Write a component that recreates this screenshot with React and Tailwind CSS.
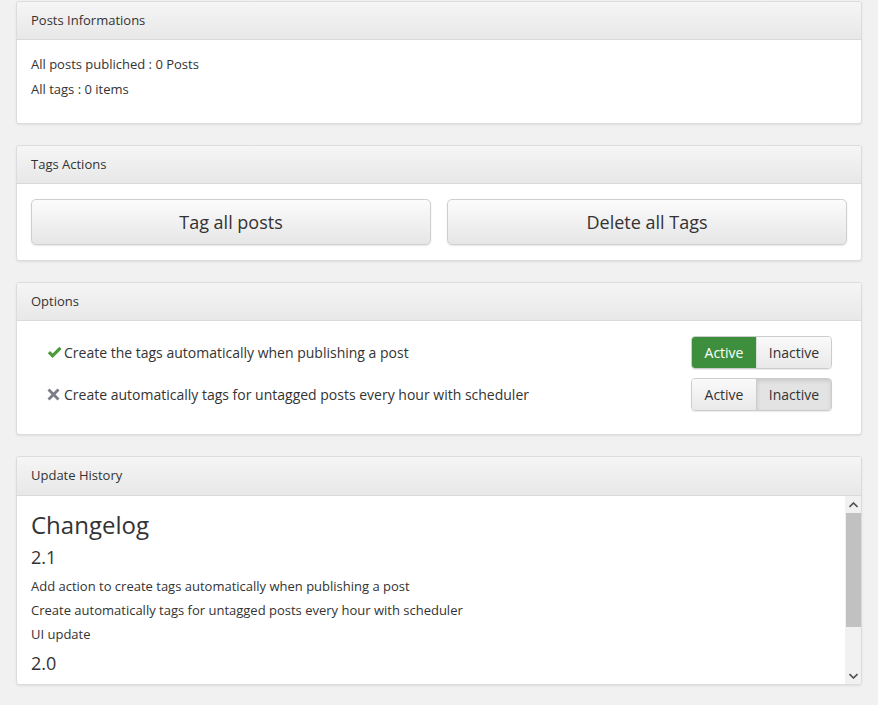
import { useState } from 'react'

const OPTIONS = [
  { key: 'publish', label: 'Create the tags automatically when publishing a post', active: true },
  { key: 'scheduler', label: 'Create automatically tags for untagged posts every hour with scheduler', active: false },
]

function Panel({ title, children, headClass = 'h-[38px]', bodyClass = '' }) {
  return (
    <div className="bg-white border border-[#dcdcdc] rounded-[3px] shadow-[0_1px_2px_rgba(0,0,0,0.08)]">
      <div className={`${headClass} flex items-center px-[14px] text-[13px] text-[#333] bg-gradient-to-b from-[#f5f5f5] to-[#e8e8e8] border-b border-[#dadada] rounded-t-[3px]`}>
        {title}
      </div>
      <div className={bodyClass}>{children}</div>
    </div>
  )
}

function Toggle({ active, onChange }) {
  return (
    <div className="flex rounded-[4px] border border-[#ccc] shadow-[0_1px_1px_rgba(0,0,0,0.08)] text-[14px] overflow-hidden">
      <button
        onClick={() => onChange(true)}
        className={active
          ? 'w-[64px] h-[31px] bg-[#3d8f3d] text-white'
          : 'w-[64px] h-[31px] bg-gradient-to-b from-[#fafafa] to-[#e9e9e9] text-[#333]'}
      >
        Active
      </button>
      <button
        onClick={() => onChange(false)}
        className={!active
          ? 'w-[75px] h-[31px] border-l border-[#ccc] bg-[#e3e3e3] text-[#333] shadow-[inset_0_2px_4px_rgba(0,0,0,0.12)]'
          : 'w-[75px] h-[31px] border-l border-[#ddd] bg-gradient-to-b from-[#fafafa] to-[#e9e9e9] text-[#333]'}
      >
        Inactive
      </button>
    </div>
  )
}

function CheckIcon() {
  return (
    <svg width="15" height="13" viewBox="0 0 15 13" className="shrink-0">
      <path d="M0.8 7.2 L3 5 L5.6 7.6 L12.4 0.8 L14.6 3 L5.6 12 Z" fill="#4a9a3a" />
    </svg>
  )
}

function CrossIcon() {
  return (
    <svg width="15" height="13" viewBox="0 0 15 13" className="shrink-0">
      <path d="M2.5 0.5 L6.5 4.5 L10.5 0.5 L12.5 2.5 L8.5 6.5 L12.5 10.5 L10.5 12.5 L6.5 8.5 L2.5 12.5 L0.5 10.5 L4.5 6.5 L0.5 2.5 Z" fill="#7c7c8a" />
    </svg>
  )
}

function FakeScrollbar() {
  return (
    <div className="w-[16px] shrink-0 bg-[#f1f1f1] flex flex-col items-center">
      <div className="h-[17px] flex items-center justify-center">
        <svg width="9" height="6" viewBox="0 0 9 6"><path d="M0.5 5 L4.5 1 L8.5 5" stroke="#505050" strokeWidth="1.6" fill="none" /></svg>
      </div>
      <div className="w-[15px] h-[114px] bg-[#c1c1c1]" />
      <div className="flex-1" />
      <div className="h-[17px] flex items-center justify-center">
        <svg width="9" height="6" viewBox="0 0 9 6"><path d="M0.5 1 L4.5 5 L8.5 1" stroke="#505050" strokeWidth="1.6" fill="none" /></svg>
      </div>
    </div>
  )
}

export default function App() {
  const [opts, setOpts] = useState(() => {
    const initial = {}
    OPTIONS.forEach(o => { initial[o.key] = o.active })
    return initial
  })

  return (
    <div className="min-h-[705px] bg-[#f1f1f1] pt-px px-[16px] pb-4 flex flex-col gap-[21px] text-[#333]" style={{ fontFamily: '"Open Sans", "Noto Sans", sans-serif' }}>
      {/* Posts Informations */}
      <Panel title="Posts Informations" bodyClass="px-[14px] pt-[12px] pb-[21px] text-[13px] leading-[25px]">
        <p>All posts publiched : 0 Posts</p>
        <p>All tags : 0 items</p>
      </Panel>

      {/* Tags Actions */}
      <Panel title="Tags Actions" bodyClass="px-[14px] py-[15px] flex gap-[16px]">
        <button className="flex-1 h-[46px] rounded-[5px] border border-[#cfcfcf] bg-gradient-to-b from-[#fcfcfc] to-[#e6e6e6] text-[18px] text-[#333] shadow-[0_1px_2px_rgba(0,0,0,0.1)]">
          Tag all posts
        </button>
        <button className="flex-1 h-[46px] rounded-[5px] border border-[#cfcfcf] bg-gradient-to-b from-[#fcfcfc] to-[#e6e6e6] text-[18px] text-[#333] shadow-[0_1px_2px_rgba(0,0,0,0.1)]">
          Delete all Tags
        </button>
      </Panel>

      {/* Options */}
      <Panel title="Options" bodyClass="pl-[30px] pr-[29px] pt-[15px] pb-[23px] flex flex-col gap-[9px]">
        {OPTIONS.map(o => (
          <div key={o.key} className="flex items-center justify-between">
            <div className="flex items-center gap-[2px] text-[14px]">
              {opts[o.key] ? <CheckIcon /> : <CrossIcon />}
              <span>{o.label}</span>
            </div>
            <Toggle active={opts[o.key]} onChange={(v) => setOpts(prev => ({ ...prev, [o.key]: v }))} />
          </div>
        ))}
      </Panel>

      {/* Update History */}
      <Panel title="Update History" headClass="h-[39px]" bodyClass="h-[188px] flex">
        <div className="flex-1 px-[14px] pt-[15px] overflow-hidden">
          <h1 className="text-[24px] leading-[28px]">Changelog</h1>
          <h3 className="text-[18px] leading-[22px] mt-[7px]">2.1</h3>
          <div className="mt-[6px] text-[13px] leading-[24px]">
            <p>Add action to create tags automatically when publishing a post</p>
            <p>Create automatically tags for untagged posts every hour with scheduler</p>
            <p>UI update</p>
          </div>
          <h3 className="text-[18px] leading-[22px] mt-[6px]">2.0</h3>
        </div>
        <FakeScrollbar />
      </Panel>
    </div>
  )
}
